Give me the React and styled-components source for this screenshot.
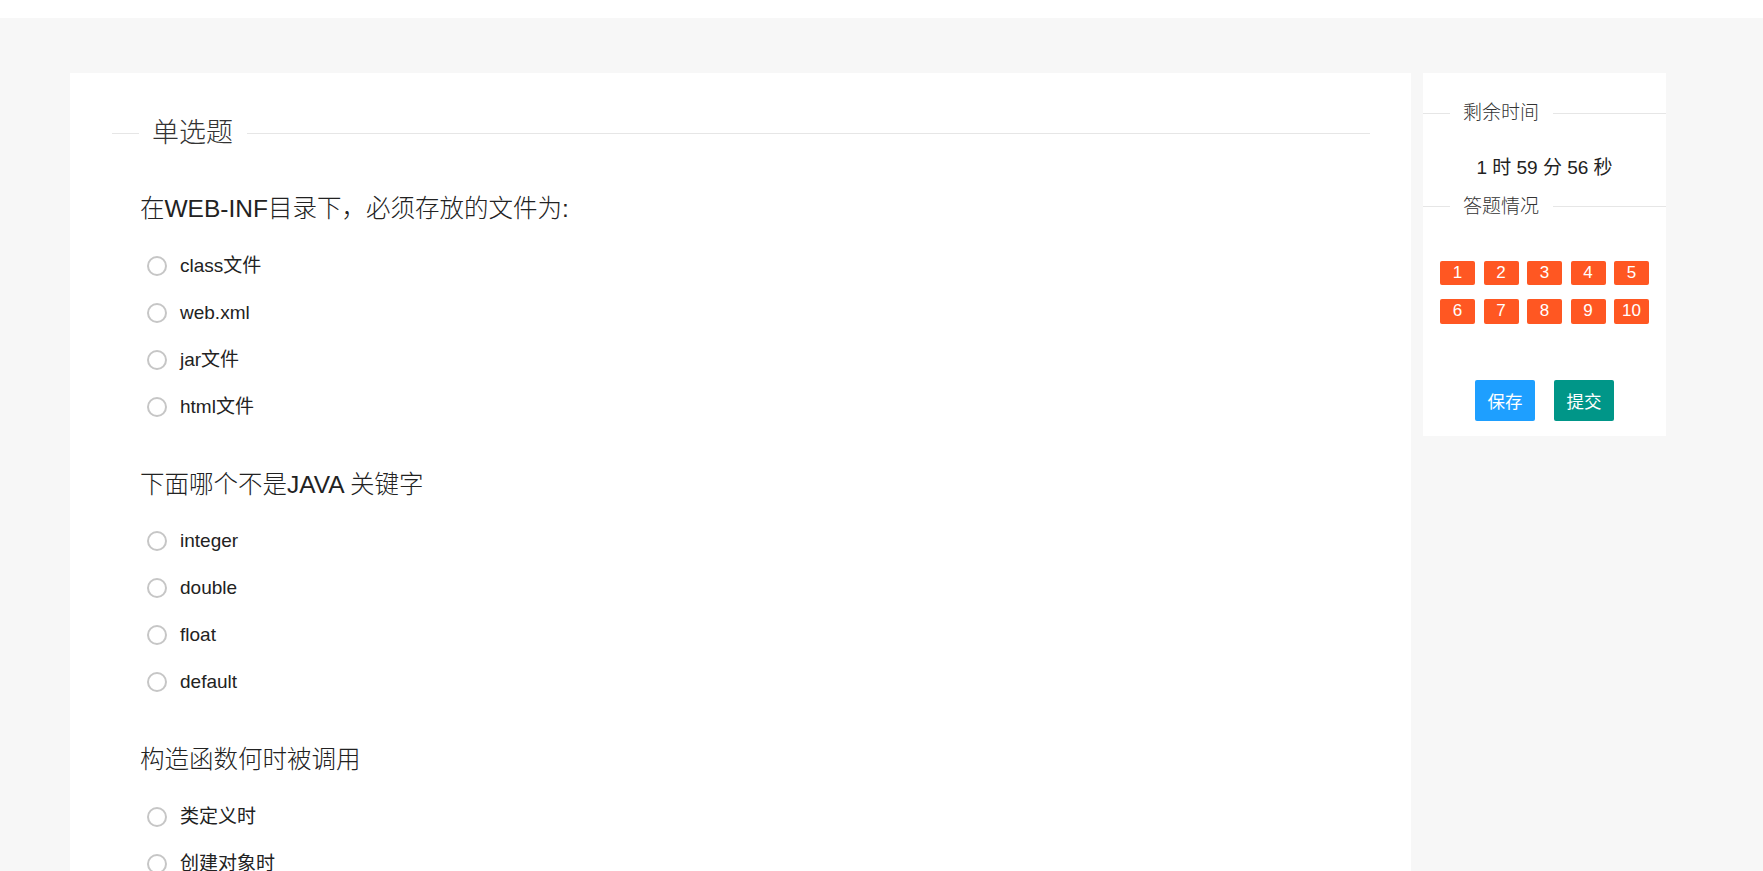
import React from 'react'
import styled, { createGlobalStyle } from 'styled-components'

const GlobalStyle = createGlobalStyle`
  body {
    margin: 0;
    background: #f7f7f7;
    font-family: "Liberation Sans", "Noto Sans CJK SC", sans-serif;
    color: #333;
  }
`

const TopBar = styled.div`
  height: 18px;
  background: #fff;
`

const Main = styled.div`
  display: flex;
  align-items: flex-start;
  gap: 12px;
  padding: 55px 97px 0 70px;
`

const Card = styled.div`
  flex: 1;
  background: #fff;
  padding: 42px 41px 40px 42px;
`

const FieldTitle = styled.div`
  display: flex;
  align-items: center;
  font-size: ${p => p.size || 19}px;
  line-height: ${p => p.lh || 26}px;
  font-weight: 300;
  color: #333;

  &::before,
  &::after {
    content: '';
    height: 1px;
    background: #e6e6e6;
  }
  &::before {
    width: 27px;
  }
  &::after {
    flex: 1;
  }

  span {
    padding: 0 14px 0 13px;
  }
`

const Question = styled.div`
  margin: ${p => (p.first ? 42 : 38.5)}px 0 0 28px;
`

const QTitle = styled.div`
  font-size: 24.5px;
  line-height: 32px;
  font-weight: 300;
  color: #222;
  margin-bottom: 17px;
`

const Option = styled.label`
  display: flex;
  align-items: center;
  height: 47px;
  padding-left: 7px;
  font-size: 19px;
  line-height: 26px;
  color: #222;
  cursor: pointer;
`

const Radio = styled.span`
  width: 16px;
  height: 16px;
  border: 2px solid #c6c6c6;
  border-radius: 50%;
  margin-right: 13px;
  flex-shrink: 0;
`

const Side = styled.div`
  width: 243px;
  background: #fff;
  padding: 27px 0 15px;
`

const Timer = styled.div`
  text-align: center;
  font-size: 19px;
  line-height: 26px;
  color: #222;
  margin: 29px 0 12.5px;
`

const Grid = styled.div`
  display: grid;
  grid-template-columns: repeat(5, 35px);
  column-gap: 8.5px;
  row-gap: 14px;
  justify-content: center;
  margin-top: 41px;
`

const NumBox = styled.span`
  height: 24.5px;
  line-height: 24.5px;
  background: #ff5722;
  color: #fff;
  border-radius: 2px;
  text-align: center;
  font-size: 17px;
`

const Actions = styled.div`
  display: flex;
  justify-content: center;
  gap: 19px;
  margin-top: 56px;
`

const Button = styled.button`
  height: 41px;
  padding: 0 12.5px;
  border: none;
  border-radius: 2px;
  background: ${p => p.color};
  color: #fff;
  font-family: inherit;
  font-size: 17.5px;
  cursor: pointer;
`

const questions = [
  {
    title: '在WEB-INF目录下，必须存放的文件为:',
    options: ['class文件', 'web.xml', 'jar文件', 'html文件'],
  },
  {
    title: '下面哪个不是JAVA 关键字',
    options: ['integer', 'double', 'float', 'default'],
  },
  {
    title: '构造函数何时被调用',
    options: ['类定义时', '创建对象时', '调用对象方法时', '使用对象的变量时'],
  },
]

function App() {
  return (
    <>
      <GlobalStyle />
      <TopBar />
      <Main>
        <Card>
          <FieldTitle size={27} lh={36}>
            <span>单选题</span>
          </FieldTitle>
          {questions.map((q, i) => (
            <Question key={i} first={i === 0}>
              <QTitle>{q.title}</QTitle>
              {q.options.map(o => (
                <Option key={o}>
                  <Radio />
                  {o}
                </Option>
              ))}
            </Question>
          ))}
        </Card>
        <Side>
          <FieldTitle>
            <span>剩余时间</span>
          </FieldTitle>
          <Timer>1 时 59 分 56 秒</Timer>
          <FieldTitle>
            <span>答题情况</span>
          </FieldTitle>
          <Grid>
            {Array.from({ length: 10 }, (_, i) => (
              <NumBox key={i}>{i + 1}</NumBox>
            ))}
          </Grid>
          <Actions>
            <Button color="#1e9fff">保存</Button>
            <Button color="#009688">提交</Button>
          </Actions>
        </Side>
      </Main>
    </>
  )
}

export default App
